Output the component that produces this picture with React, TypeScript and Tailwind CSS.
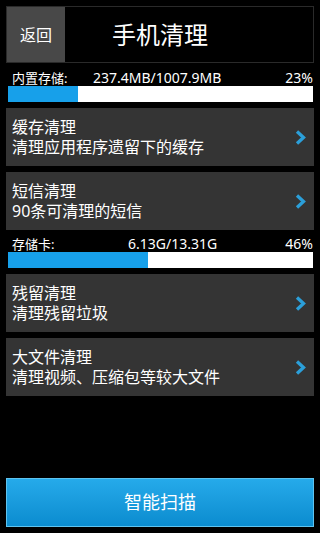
import React from "react";

const font = { fontFamily: '"Noto Sans", "Noto Sans CJK SC", sans-serif' };

function Chevron() {
  return (
    <svg width="11" height="15" viewBox="0 0 11 15" className="shrink-0">
      <path d="M2 1.5 L8.5 7.5 L2 13.5" fill="none" stroke="#2b9fd9" strokeWidth="3.3" strokeLinejoin="miter" strokeLinecap="butt" />
    </svg>
  );
}

function Card({ title, sub, mt }: { title: string; sub: string; mt: string }) {
  return (
    <div className={`mx-[6px] ${mt} h-[58px] bg-[#343434] flex items-center pl-[6px] pr-[8px]`}>
      <div className="flex-1 flex flex-col text-white text-[16px] leading-[20px]">
        <span>{title}</span>
        <span>{sub}</span>
      </div>
      <Chevron />
    </div>
  );
}

function Storage({ label, value, pct, labelW, mt }: { label: string; value: string; pct: number; labelW: string; mt: string }) {
  return (
    <div className={mt}>
      <div className="flex items-center h-[16px] leading-[16px] text-white text-[13px] pl-[12px] pr-[7px]">
        <span className={`${labelW} shrink-0`}>{label}</span>
        <span className="flex-1 text-[14px]">{value}</span>
        <span className="text-[14px]">{pct}%</span>
      </div>
      <div className="ml-[8px] mr-[7px] h-[16px] bg-white flex">
        <div className="h-full bg-[#17a0ea]" style={{ width: `${pct}%` }} />
      </div>
    </div>
  );
}

export default function App() {
  return (
    <div className="w-[320px] h-[533px] bg-black flex flex-col" style={font}>
      <div className="mt-[6px] mx-[6px] h-[57px] border border-[#2a2a2a] flex">
        <div className="w-[58px] bg-[#484848] flex items-center justify-center text-white text-[16px]">返回</div>
        <div className="flex-1 flex items-center justify-center pr-[58px] text-white text-[24px]">手机清理</div>
      </div>
      <Storage label="内置存储:" value="237.4MB/1007.9MB" pct={23} labelW="w-[81px]" mt="mt-[7px]" />
      <Card title="缓存清理" sub="清理应用程序遗留下的缓存" mt="mt-[6px]" />
      <Card title="短信清理" sub="90条可清理的短信" mt="mt-[6px]" />
      <Storage label="存储卡:" value="6.13G/13.31G" pct={46} labelW="w-[116px]" mt="mt-[6px]" />
      <Card title="残留清理" sub="清理残留垃圾" mt="mt-[6px]" />
      <Card title="大文件清理" sub="清理视频、压缩包等较大文件" mt="mt-[6px]" />
      <div className="mt-auto mb-[6px] mx-[6px] h-[49px] border border-[#5ec3ef] bg-gradient-to-b from-[#25aaea] to-[#0a8ccf] flex items-center justify-center text-white text-[18px]">
        智能扫描
      </div>
    </div>
  );
}
